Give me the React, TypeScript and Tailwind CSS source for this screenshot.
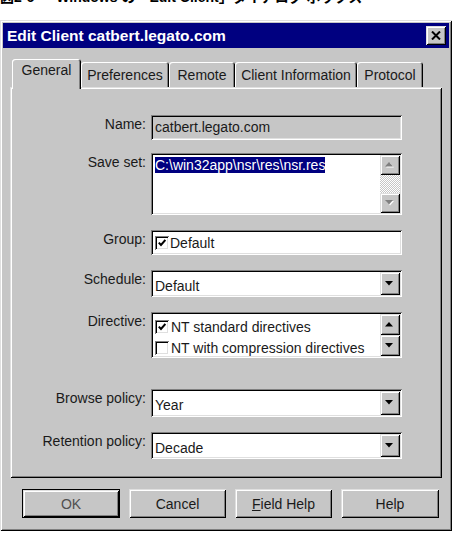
import React from "react";

// Win95-style bevels
const RAISED =
  "shadow-[inset_1px_1px_0_#dfdfdf,inset_-1px_-1px_0_#000,inset_2px_2px_0_#fff,inset_-2px_-2px_0_#808080]";
const SUNKEN =
  "shadow-[inset_1px_1px_0_#808080,inset_-1px_-1px_0_#fff,inset_2px_2px_0_#000,inset_-2px_-2px_0_#dfdfdf]";

function Arrow({ up, disabled }: { up?: boolean; disabled?: boolean }) {
  const d = up ? "M4 0 L8 4.5 L0 4.5 Z" : "M0 0 L8 0 L4 4.5 Z";
  return (
    <svg width="10" height="6" viewBox="0 0 10 6">
      {disabled && <path d={d} transform="translate(1 1)" fill="#fff" />}
      <path d={d} fill={disabled ? "#808080" : "#000"} />
    </svg>
  );
}

function ScrollButton({ up, disabled, size }: { up?: boolean; disabled?: boolean; size: string }) {
  return (
    <div className={`flex items-center justify-center bg-[#c6c6c6] ${RAISED} ${size}`}>
      <Arrow up={up} disabled={disabled} />
    </div>
  );
}

function Check({ checked }: { checked?: boolean }) {
  return (
    <div className={`w-[14px] h-[14px] shrink-0 bg-white flex items-center justify-center ${SUNKEN}`}>
      {checked && (
        <svg width="8" height="8" viewBox="0 0 8 8">
          <path d="M0.8 3.6 L3 6 L7.4 1" fill="none" stroke="#000" strokeWidth="2" />
        </svg>
      )}
    </div>
  );
}

function Row({ label, gap, children }: { label: string; gap: string; children: React.ReactNode }) {
  return (
    <div className={`flex items-start ${gap}`}>
      <div className="w-[134px] text-right pt-[1px]">{label}</div>
      <div className="ml-[5px] w-[251px]">{children}</div>
    </div>
  );
}

function Combo({ value, height }: { value: string; height: string }) {
  return (
    <div className={`flex bg-white p-[2px] ${SUNKEN} ${height}`}>
      <div className="flex-1 pl-[2px] pt-[6px]">{value}</div>
      <ScrollButton size="w-[20px] h-full" />
    </div>
  );
}

const tabs = [
  { name: "General", w: "w-[69px]", active: true },
  { name: "Preferences", w: "w-[88px]" },
  { name: "Remote", w: "w-[66px]" },
  { name: "Client Information", w: "w-[122px]" },
  { name: "Protocol", w: "w-[66px]" },
];

export default function App() {
  return (
    <div className="w-[456px] h-[533px] bg-white overflow-hidden font-['Liberation_Sans',Arial,sans-serif] text-[14px] leading-[16px] text-[#1a1a1a]">
      {/* figure caption, its top runs off the page */}
      <div className="h-[20px] overflow-hidden">
        <div className="-mt-[10px] flex whitespace-pre font-bold text-[14px] leading-[15px] text-black font-['Liberation_Sans','Noto_Sans_CJK_JP',sans-serif]">
          <span>図2-6</span>
          <span className="ml-[22px]">Windows の「Edit Client」ダイアログ ボックス</span>
        </div>
      </div>

      <div className={`w-[452px] h-[511px] bg-[#c6c6c6] p-[3px] flex flex-col ${RAISED}`}>
        {/* title bar */}
        <div className="h-[25px] shrink-0 bg-[#000080] flex items-center justify-between pl-[4px] pr-[3px]">
          <span className="text-white font-bold text-[15.5px] leading-[18px]">Edit Client catbert.legato.com</span>
          <div className={`w-[20px] h-[19px] bg-[#c6c6c6] flex items-center justify-center ${RAISED}`}>
            <svg width="10" height="9" viewBox="0 0 10 9">
              <path d="M1 0.5 L9 8.5 M9 0.5 L1 8.5" stroke="#000" strokeWidth="2" />
            </svg>
          </div>
        </div>

        <div className="mx-[7px] mt-[11px]">
          {/* tabs */}
          <div className="relative z-10 flex items-end h-[28px] pl-[2px]">
            {tabs.map((t) => (
              <div
                key={t.name}
                className={
                  t.active
                    ? `${t.w} h-[30px] -mb-[2px] bg-[#c6c6c6] rounded-t-[3px] text-center pt-[3px] shadow-[inset_1px_1px_0_#fff,inset_-1px_0_0_#000,inset_-2px_0_0_#808080]`
                    : `${t.w} h-[25px] bg-[#c6c6c6] rounded-t-[3px] text-center pt-[5px] shadow-[inset_1px_1px_0_#fff,inset_-1px_0_0_#000,inset_-2px_0_0_#808080]`
                }
              >
                {t.name}
              </div>
            ))}
          </div>

          {/* General page */}
          <div className={`h-[391px] bg-[#c6c6c6] pt-[28px] pl-[2px] ${RAISED}`}>
            <Row label="Name:" gap="mt-0">
              <div className={`h-[25px] px-[4px] pt-[4px] bg-[#c6c6c6] ${SUNKEN}`}>catbert.legato.com</div>
            </Row>

            <Row label="Save set:" gap="mt-[13px]">
              <div className={`h-[62px] flex bg-white p-[2px] ${SUNKEN}`}>
                <div className="flex-1 pl-[2px] pt-[2px]">
                  <span className="bg-[#000080] text-white">C:\win32app\nsr\res\nsr.res</span>
                </div>
                <div className="w-[20px] flex flex-col">
                  <ScrollButton up disabled size="h-[20px]" />
                  <div className="flex-1 bg-[repeating-conic-gradient(#ffffff_0_25%,#c6c6c6_0_50%)] bg-[length:2px_2px]" />
                  <ScrollButton disabled size="h-[20px]" />
                </div>
              </div>
            </Row>

            <Row label="Group:" gap="mt-[15px]">
              <div className={`h-[25px] flex items-center gap-[1px] bg-white pl-[4px] pt-[1px] ${SUNKEN}`}>
                <Check checked />
                <span>Default</span>
              </div>
            </Row>

            <Row label="Schedule:" gap="mt-[15px]">
              <Combo value="Default" height="h-[27px]" />
            </Row>

            <Row label="Directive:" gap="mt-[15px]">
              <div className={`h-[46px] flex bg-white p-[2px] ${SUNKEN}`}>
                <div className="flex-1 pl-[2px] pt-[2px]">
                  <div className="h-[21px] flex items-center gap-[2px]">
                    <Check checked />
                    <span>NT standard directives</span>
                  </div>
                  <div className="h-[21px] flex items-center gap-[2px]">
                    <Check />
                    <span>NT with compression directives</span>
                  </div>
                </div>
                <div className="w-[20px] flex flex-col">
                  <ScrollButton up size="h-[21px]" />
                  <ScrollButton size="h-[21px]" />
                </div>
              </div>
            </Row>

            <Row label="Browse policy:" gap="mt-[31px]">
              <Combo value="Year" height="h-[28px]" />
            </Row>

            <Row label="Retention policy:" gap="mt-[15px]">
              <Combo value="Decade" height="h-[27px]" />
            </Row>
          </div>
        </div>

        {/* dialog buttons */}
        <div className="mt-[11px] pl-[19px] flex gap-[9px]">
          <div className={`w-[98px] h-[29px] flex items-center justify-center border border-black text-[#505050] ${RAISED}`}>
            OK
          </div>
          <div className={`w-[97px] h-[29px] flex items-center justify-center ${RAISED}`}>Cancel</div>
          <div className={`w-[97px] h-[29px] flex items-center justify-center ${RAISED}`}>
            <span>
              <span className="underline">F</span>ield Help
            </span>
          </div>
          <div className={`w-[98px] h-[29px] flex items-center justify-center ${RAISED}`}>Help</div>
        </div>
      </div>
    </div>
  );
}
